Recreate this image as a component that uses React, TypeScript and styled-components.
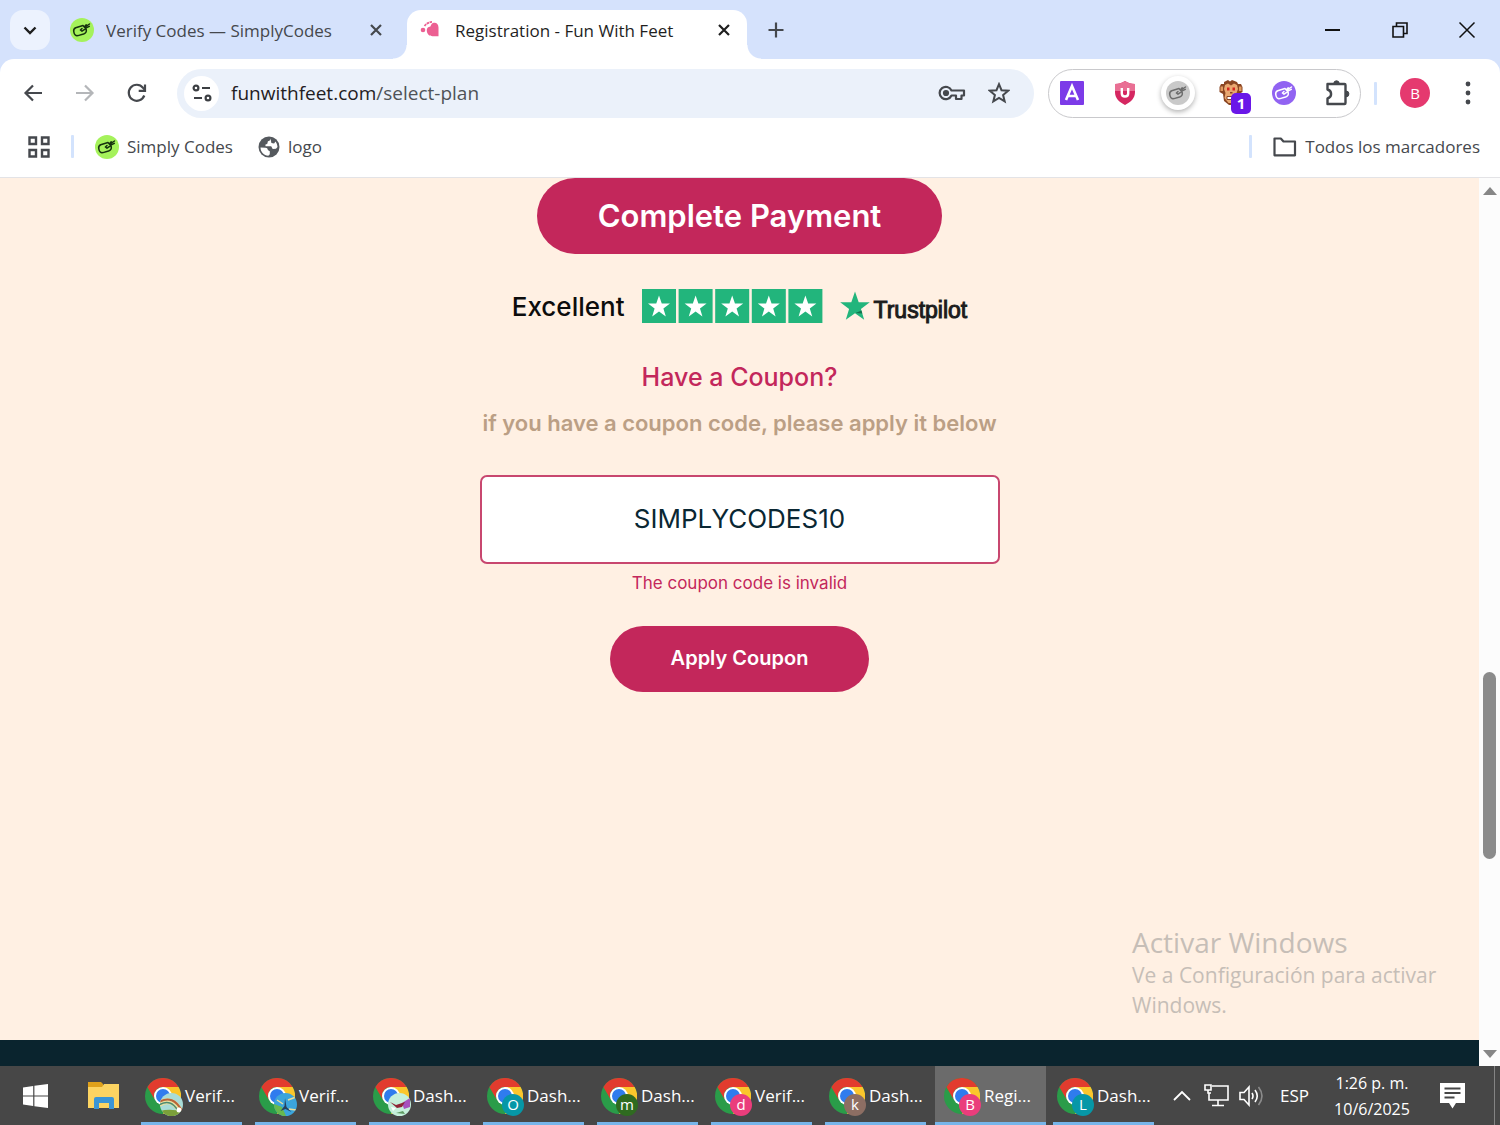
import React from "react";
import styled, { createGlobalStyle } from "styled-components";

const UI = `"Open Sans", "Noto Sans", sans-serif`;
const BRAND = `Inter, "Liberation Sans", sans-serif`;
const ROSE = "#c3275b";

const Global = createGlobalStyle`
  * { box-sizing: border-box; }
  body { margin: 0; font-family: ${UI}; }
  button { border: 0; padding: 0; background: none; font: inherit; color: inherit; cursor: pointer; }
  svg { display: block; flex: none; }
`;

const Desktop = styled.div`
  min-height: 100vh;
  display: flex;
  flex-direction: column;
  background: #d5e2fc;
`;

/* ---------- Tab strip ---------- */

const TabStrip = styled.header`
  height: 59px;
  display: flex;
  align-items: flex-start;
  padding: 10px 0 0 10px;
`;

const TabSearch = styled.button`
  width: 40px;
  height: 40px;
  border-radius: 13px;
  background: #ecf2fe;
  display: grid;
  place-items: center;
`;

const Tab = styled.div<{ $active?: boolean }>`
  position: relative;
  width: ${(p) => (p.$active ? 340 : 357)}px;
  height: ${(p) => (p.$active ? 49 : 40)}px;
  padding: ${(p) => (p.$active ? "0 12px 9px 13px" : "0 20px")};
  display: flex;
  align-items: center;
  gap: ${(p) => (p.$active ? 15 : 12)}px;
  font-size: 17px;
  color: ${(p) => (p.$active ? "#1f1f1f" : "#45484d")};
  background: ${(p) => (p.$active ? "#fff" : "transparent")};
  border-radius: 14px 14px 0 0;

  &::before,
  &::after {
    content: "";
    display: ${(p) => (p.$active ? "block" : "none")};
    position: absolute;
    bottom: 0;
    width: 14px;
    height: 14px;
  }
  &::before {
    left: -14px;
    background: radial-gradient(circle at 0 0, transparent 13px, #fff 14px);
  }
  &::after {
    right: -14px;
    background: radial-gradient(circle at 100% 0, transparent 13px, #fff 14px);
  }
`;

const TabTitle = styled.span`
  flex: 1;
  white-space: nowrap;
  overflow: hidden;
`;

const StripButton = styled.button`
  width: 22px;
  height: 40px;
  display: grid;
  place-items: center;
`;

const NewTab = styled(StripButton)`
  margin-left: 18px;
`;

const WindowControls = styled.div`
  margin-left: auto;
  display: flex;
`;

const WindowButton = styled(StripButton)`
  width: 67px;
`;

/* ---------- Toolbar ---------- */

const Toolbar = styled.nav`
  height: 68px;
  padding: 0 12px 0 13px;
  display: flex;
  align-items: center;
  background: #fff;
  border-radius: 14px 14px 0 0;
`;

const Row = styled.div<{ $gap: number }>`
  display: flex;
  align-items: center;
  gap: ${(p) => p.$gap}px;
`;

const IconButton = styled.button`
  position: relative;
  width: 40px;
  height: 40px;
  display: grid;
  place-items: center;
`;

const Omnibox = styled.div`
  flex: 1;
  height: 49px;
  margin: 0 14px 0 20px;
  padding: 0 15px 0 7px;
  display: flex;
  align-items: center;
  border-radius: 25px;
  background: #ebf1fa;
`;

const SiteInfo = styled.button`
  width: 35px;
  height: 35px;
  border-radius: 50%;
  background: #fff;
  display: grid;
  place-items: center;
`;

const Address = styled.div`
  flex: 1;
  margin-left: 12px;
  font-size: 19px;
  color: #4f5357;

  b {
    font-weight: 400;
    color: #1f2023;
  }
`;

const Extensions = styled.div`
  height: 49px;
  padding: 0 3px;
  display: flex;
  align-items: center;
  gap: 13px;
  border: 1px solid #c9c9cc;
  border-radius: 25px;
`;

const Letter = styled.span<{ $bg: string; $size: number }>`
  width: ${(p) => p.$size}px;
  height: ${(p) => p.$size}px;
  border-radius: 50%;
  background: ${(p) => p.$bg};
  color: #fff;
  font-size: 15px;
  line-height: 1;
  display: grid;
  place-items: center;
`;

const Raised = styled.span`
  width: 34px;
  height: 34px;
  border-radius: 50%;
  background: #fff;
  box-shadow: 0 2px 5px rgba(0, 0, 0, 0.3);
  display: grid;
  place-items: center;
`;

const Count = styled.span`
  position: absolute;
  right: 0;
  bottom: -1px;
  width: 20px;
  height: 21px;
  border-radius: 5px;
  background: #6a17e8;
  color: #fff;
  font-size: 15px;
  font-weight: 700;
  line-height: 21px;
  text-align: center;
`;

const Divider = styled.span`
  width: 3px;
  height: 23px;
  border-radius: 1px;
  background: #d3e3fd;
`;

const Profile = styled.div`
  margin-left: 13px;
  display: flex;
  align-items: center;
  gap: 18px;
`;

/* ---------- Bookmarks ---------- */

const Bookmarks = styled.nav`
  height: 51px;
  padding: 0 20px 11px 28px;
  display: flex;
  align-items: center;
  background: #fff;
  border-bottom: 1px solid #e3e3e6;
  font-size: 17px;
  color: #45484d;
`;

const Bookmark = styled.a`
  display: flex;
  align-items: center;
  gap: 8px;
  color: inherit;
  text-decoration: none;
  white-space: nowrap;
`;

const AllBookmarks = styled.div`
  margin-left: auto;
  display: flex;
  align-items: center;
  gap: 21px;
`;

/* ---------- Page ---------- */

const Viewport = styled.div`
  flex: 1;
  display: flex;
  background: #fff;
`;

const Page = styled.div`
  position: relative;
  flex: 1;
  display: flex;
  flex-direction: column;
  background: #fff0e3;
  font-family: ${BRAND};
`;

const Main = styled.main`
  flex: 1;
  display: flex;
  flex-direction: column;
  align-items: center;
`;

const Pill = styled.button<{ $large?: boolean }>`
  height: ${(p) => (p.$large ? 76 : 66)}px;
  padding: 0 61px 2px;
  border-radius: 38px;
  background: ${ROSE};
  color: #fff;
  font-size: ${(p) => (p.$large ? 31 : 20)}px;
  font-weight: 600;
`;

const Rating = styled.div`
  height: 36px;
  margin: 34px 0;
  display: flex;
  align-items: center;
  gap: 17px;
  font-size: 26px;
  font-weight: 500;
  color: #0c0c0c;
`;

const Trust = styled.a`
  display: flex;
  align-items: flex-end;
  gap: 4px;
  color: #1c1c1c;
  font-family: "Liberation Sans", sans-serif;
  font-size: 23px;
  line-height: 24px;
  text-decoration: none;
  -webkit-text-stroke: 1px #1c1c1c;
`;

const Form = styled.form`
  width: 520px;
  max-width: 100%;
  display: flex;
  flex-direction: column;
  align-items: center;
`;

const Title = styled.h2`
  margin: 0;
  font-size: 25px;
  line-height: 38px;
  font-weight: 500;
  color: ${ROSE};
`;

const Hint = styled.label`
  margin: 11px 0 36px;
  font-size: 22px;
  line-height: 32px;
  font-weight: 600;
  color: #bb9f85;
  white-space: nowrap;
`;

const CodeInput = styled.input`
  width: 100%;
  height: 89px;
  padding: 0 0 2px;
  border: 2px solid #c8476f;
  border-radius: 7px;
  background: #fff;
  text-align: center;
  font-family: ${BRAND};
  font-size: 26px;
  color: #0a2733;
  outline: none;
`;

const ErrorText = styled.p`
  margin: 6px 0 30px;
  font-size: 17px;
  line-height: 26px;
  color: ${ROSE};
`;

const SiteFooter = styled.footer`
  height: 26px;
  background: #0a242e;
`;

const Watermark = styled.aside`
  position: absolute;
  left: calc(100% - 347px);
  bottom: 46px;
  width: 330px;
  font-family: ${UI};
  font-size: 21px;
  line-height: 30px;
  color: #c6beb7;
`;

const WatermarkTitle = styled.div`
  font-size: 28px;
  line-height: 36px;
`;

const Scrollbar = styled.div`
  width: 21px;
  display: flex;
  flex-direction: column;
  align-items: center;
  background: #fcfcfc;
`;

const ScrollArrow = styled.button`
  width: 21px;
  height: 25px;
  display: grid;
  place-items: center;
`;

const Track = styled.div<{ $grow: number }>`
  flex: ${(p) => p.$grow} 0 0;
`;

const Thumb = styled(Track)`
  width: 13px;
  border-radius: 7px;
  background: #8b8b8b;
`;

/* ---------- Taskbar ---------- */

const Taskbar = styled.footer`
  height: 59px;
  display: flex;
  background: #474747;
  color: #fff;
  font-size: 17px;
`;

const Launcher = styled.button<{ $width: number }>`
  width: ${(p) => p.$width}px;
  display: grid;
  place-items: center;
`;

const TaskButton = styled.button<{ $active?: boolean }>`
  width: ${(p) => (p.$active ? 111 : 101)}px;
  margin: ${(p) => (p.$active ? "0 1px 0 2px" : "0 7px 0 6px")};
  padding: 3px 0 0 ${(p) => (p.$active ? 9 : 4)}px;
  display: flex;
  align-items: center;
  background: ${(p) => (p.$active ? "#6b6b6b" : "transparent")};
  border-bottom: 3px solid #76b5ea;
  white-space: nowrap;
`;

const AppIcon = styled.span`
  position: relative;
  width: 40px;
  height: 40px;
  padding-top: 2px;
`;

const Badge = styled(Letter)`
  position: absolute;
  left: 15px;
  top: 18px;
`;

const Tray = styled.div`
  margin-left: auto;
  padding-right: 5px;
  display: flex;
  align-items: center;
`;

const TrayButton = styled.button<{ $width: number }>`
  width: ${(p) => p.$width}px;
  height: 59px;
  display: grid;
  place-items: center;
  white-space: nowrap;
`;

const Clock = styled(TrayButton)`
  align-content: center;
  font-size: 16px;
  line-height: 26px;
`;

const ShowDesktop = styled.span`
  width: 1px;
  height: 59px;
  margin-left: 14px;
  background: #848484;
`;

/* ---------- Icons ---------- */

const HandIcon = ({ bg, ink, size = 24 }: { bg: string; ink: string; size?: number }) => (
  <svg width={size} height={size} viewBox="0 0 24 24">
    <circle cx="12" cy="12" r="12" fill={bg} />
    <path
      d="M19.500 6l-5 3.400-1.500-1.900-7.300 2.200c-1.900.8-2.300 2.400-1.900 4.200.5 2.900 1.900 4.300 4.200 3.700l5.600-1.600c2.300-.9 3.100-2.500 2.600-4.500l-.5-1.300 3.600-1.900M12 10.500l-1.600 1.500 1.600 1.200 3-2M16.200 6.800l-2 2.200"
      fill="none"
      stroke={ink}
      strokeWidth="1.500"
      strokeLinecap="round"
      strokeLinejoin="round"
    />
  </svg>
);

const Cross = ({ size = 12, color = "#45484d", width = 2.2 }: { size?: number; color?: string; width?: number }) => (
  <svg width={size} height={size} viewBox="0 0 12 12">
    <path d="M1 1l10 10M11 1L1 11" stroke={color} strokeWidth={width} />
  </svg>
);

const HeartFeet = () => (
  <svg width="20" height="18" viewBox="0 0 20 18">
    <path d="M18.500 15.200V6.500C18.500 3 16 1 13 2c-1.600.6-2 2-2.600 3.600C8 5.800 6.500 7.500 6.800 10c.4 3.500 3 5.200 5.700 5.200z" fill="#ec5f92" />
    <circle cx="3" cy="9" r="2.300" fill="#ec5f92" />
    <path d="M4.500 5C6 3 8.500 1.200 12 0.900" fill="none" stroke="#ec5f92" strokeWidth="1.800" strokeDasharray="2.600 0.600" />
  </svg>
);

const Arrow = ({ color, flip }: { color: string; flip?: boolean }) => (
  <svg width="20" height="18" viewBox="0 0 20 18">
    <path d={flip ? "M1 9h16M10 1.500L17.500 9 10 16.500" : "M19 9H3M10 1.500L2.500 9l7.500 7.500"} fill="none" stroke={color} strokeWidth="2.200" />
  </svg>
);

const Reload = () => (
  <svg width="20" height="20" viewBox="0 0 20 20">
    <path d="M17.300 12.500A8 8 0 1 1 16 4.700L18 7" fill="none" stroke="#45484d" strokeWidth="2.200" />
    <path d="M18 1.500v6.300h-6.300" fill="none" stroke="#45484d" strokeWidth="2.200" />
  </svg>
);

const Tune = () => (
  <svg width="20" height="18" viewBox="0 0 20 18" fill="none" stroke="#3c3f43" strokeWidth="2.200">
    <circle cx="4" cy="4" r="2.400" />
    <path d="M10 4h8M2 14h8" />
    <circle cx="16" cy="14" r="2.400" />
  </svg>
);

const KeyIcon = () => (
  <svg width="28" height="18" viewBox="0 0 28 18" fill="none" stroke="#45484d" strokeWidth="2.200" strokeLinejoin="round">
    <path d="M13.500 6.500A6.200 6.200 0 1 0 13.500 11.500H18V15h5.500v-3.500H26v-5z" />
    <circle cx="8" cy="9" r="2" fill="#45484d" />
  </svg>
);

const StarOutline = () => (
  <svg width="22" height="22" viewBox="0 0 22 22">
    <path d="M11 2.200l2.500 6 6.600.5-5 4.300 1.600 6.400L11 16l-5.700 3.400L6.900 13l-5-4.300 6.600-.5z" fill="none" stroke="#45484d" strokeWidth="2" />
  </svg>
);

const LetterA = () => (
  <svg width="24" height="24" viewBox="0 0 24 24">
    <rect width="24" height="24" rx="1" fill="#7c3be8" />
    <path d="M6 19L12 5l6 14M8.500 15h7" fill="none" stroke="#fff" strokeWidth="2.600" />
  </svg>
);

const Shield = () => (
  <svg width="22" height="24" viewBox="0 0 22 24">
    <path d="M11 0c3 2 6 3 10 3v8c0 6-4 10-10 13C5 21 1 17 1 11V3c4 0 7-1 10-3z" fill="#d52761" />
    <path d="M11 0c3 2 6 3 10 3v7H1V3c4 0 7-1 10-3z" fill="#e96f94" />
    <path d="M7.800 7v5.500c0 4 6.400 4 6.400 0V7" fill="none" stroke="#fff" strokeWidth="2.400" />
  </svg>
);

const Monkey = () => (
  <svg width="24" height="26" viewBox="0 0 24 26">
    <path d="M5 2l4-2 2 1.500L13 0l5 2 1 2h3l1.500 3v5L20 14l-1 7-5 4h-4l-5-4-1-7-3.500-2V7L2 4h3z" fill="#8a4522" />
    <path d="M6 5l3-1.500 3 2 3-2L18 5l1 4-1.500 4 1 5-4 5H9.500l-4-5 1-5L5 9z" fill="#e9a870" />
    <path d="M1.500 6.500h2.500v4.500H1.500zM20 6.500h2.500v4.500H20z" fill="#e0995f" />
    <path d="M8 7.500h2.500v3H8zM13.500 7.500H16v3h-2.500z" fill="#d5251e" />
    <path d="M11 12h2.500v1.500H11z" fill="#8a4522" />
    <path d="M8 16.500h8v3H8z" fill="#fff" stroke="#8a4522" />
  </svg>
);

const Puzzle = () => (
  <svg width="26" height="28" viewBox="0 0 26 28">
    <path d="M3.500 5H20.500q1 0 1 1V24q0 1-1 1H3.500v-5.500c4.800-1.500 4.800-7.500 0-9z" fill="none" stroke="#45484d" strokeWidth="2.400" strokeLinejoin="round" />
    <path d="M9.800 4.500a2.700 2.700 0 0 1 5.400 0zM22 12a2.900 2.900 0 0 1 0 5.800z" fill="#45484d" stroke="#45484d" />
  </svg>
);

const Dots = () => (
  <svg width="6" height="24" viewBox="0 0 6 24" fill="#45484d">
    <circle cx="3" cy="3" r="2.400" />
    <circle cx="3" cy="12" r="2.400" />
    <circle cx="3" cy="21" r="2.400" />
  </svg>
);

const Apps = () => (
  <svg width="22" height="22" viewBox="0 0 22 22" fill="none" stroke="#45484d" strokeWidth="2.400">
    <path d="M1.500 1.500h6.500v6.500H1.500zM14 1.500h6.500v6.500H14zM1.500 14h6.500v6.500H1.500zM14 14h6.500v6.500H14z" />
  </svg>
);

const Globe = () => (
  <svg width="22" height="22" viewBox="0 0 22 22">
    <circle cx="11" cy="11" r="10.500" fill="#55595e" />
    <path d="M2.500 11.500l5 .2c1.800.2 2.300 1 2.300 2.300l2 1.200v3l-1.500 1.600C6 19.500 2.600 16 2.500 11.500zM12.500 2.500c-.2 1.800-1 2.500-2.600 2.800l-.6 2.400-2 1 .3 1.600h5.600l1.500 2.800 3.300-.3 1.500-1.800c-.2-2-.8-4-2-5.500l-1.400 2-2.700-.6z" fill="#fff" />
  </svg>
);

const Folder = () => (
  <svg width="24" height="20" viewBox="0 0 24 20">
    <path d="M1.500 1.500h6.300l2.700 3h11.500v13.800H1.500z" fill="none" stroke="#45484d" strokeWidth="2.200" strokeLinejoin="round" />
  </svg>
);

const STAR = "M0-10.500L2.500-3.200H10L4 1.300 6.200 8.600 0 4.200-6.200 8.600-4 1.300-10-3.200H-2.500z";

const Stars = () => (
  <svg width="181" height="34" viewBox="0 0 181 34" role="img" aria-label="5 of 5 stars">
    {[0, 1, 2, 3, 4].map((i) => (
      <g key={i} transform={`translate(${i * 36.6} 0)`}>
        <rect width="34" height="34" fill="#22b57c" />
        <path d={STAR} transform="translate(17 18) scale(1.100)" fill="#fff" />
      </g>
    ))}
  </svg>
);

const TrustStar = () => (
  <svg width="30" height="32" viewBox="0 0 30 32">
    <path d={STAR} transform="translate(15 17) scale(1.480)" fill="#22b57c" />
    <path d="M15.500 23l6-2.500.8 3z" fill="#12724c" />
  </svg>
);

const Triangle = ({ down }: { down?: boolean }) => (
  <svg width="14" height="8" viewBox="0 0 14 8">
    <path d={down ? "M0 0h14L7 8z" : "M0 8h14L7 0z"} fill="#868686" />
  </svg>
);

const Chrome = () => (
  <svg width="36" height="36" viewBox="0 0 36 36">
    <circle cx="18" cy="18" r="18" fill="#2a9c49" />
    <path d="M18 9h15.600A18 18 0 0 1 18 36l7.800-13.500z" fill="#fbc62c" />
    <path d="M2.400 9A18 18 0 0 1 33.600 9H18a9 9 0 0 0-7.800 13.500z" fill="#e23b2e" />
    <circle cx="18" cy="18" r="9" fill="#fff" />
    <circle cx="18" cy="18" r="7" fill="#2f7cee" />
  </svg>
);

const Round = styled.svg`
  position: absolute;
  left: 15px;
  top: 17px;
  border-radius: 50%;
`;

const Scene = ({ kind }: { kind: string }) => (
  <Round width="23" height="23" viewBox="0 0 23 23">
    {kind === "rainbow" && (
      <>
        <rect width="23" height="23" fill="#a9dcd8" />
        <path d="M-1 11Q12 3 20 18" fill="none" stroke="#e9dfa0" strokeWidth="6" />
        <path d="M-1 9Q13 1 22 18" fill="none" stroke="#b8643a" strokeWidth="2" />
        <path d="M-1 12Q11 5 18 18" fill="none" stroke="#4b8b72" strokeWidth="1.500" />
        <path d="M0 18q11-3 23 1v4H0z" fill="#7ba03a" />
        <circle cx="19" cy="17" r="2.500" fill="#fff" />
      </>
    )}
    {kind === "map" && (
      <>
        <rect width="23" height="23" fill="#3ba5dc" />
        <path d="M0 11l8 3 4 9H0z" fill="#68b94e" />
        <path d="M11 5l1.500 9 5 5-6-3-5 2 4-5z" fill="#26405e" />
        <path d="M14 7l8-3M3 7l6 4M15 16l7 1" stroke="#eadf9a" strokeWidth="1.500" />
      </>
    )}
    {kind === "bird" && (
      <>
        <rect width="23" height="23" fill="#c5f0dc" />
        <path d="M14 10l8-5v9l-6 2z" fill="#a651bd" />
        <path d="M2 9l6 3 9-3-3 5-5 1z" fill="#8f2638" />
        <path d="M3 14l5 1-3 3z" fill="#fff" />
        <path d="M8 20l7-2 2 3z" fill="#5f9b64" />
      </>
    )}
  </Round>
);

const WindowsLogo = () => (
  <svg width="25" height="24" viewBox="0 0 25 24" fill="#fff">
    <path d="M0 3.400l10.200-1.400v9.500H0zM11.400 1.800L25 0v11.500H11.400zM0 12.600h10.200V22L0 20.600zM11.400 12.600H25V24l-13.600-1.800z" />
  </svg>
);

const Explorer = () => (
  <svg width="33" height="28" viewBox="0 0 33 28">
    <path d="M1 0h13l2 2v4H1z" fill="#dfa11b" />
    <path d="M1 5h14l2-3h15v24H1z" fill="#fcd462" />
    <path d="M7 27V17q0-2 2-2h16q2 0 2 2v10h-5v-6H12v6z" fill="#3a95d6" />
  </svg>
);

const Monitor = () => (
  <svg width="25" height="23" viewBox="0 0 25 23" fill="none" stroke="#fff" strokeWidth="1.600">
    <path d="M8 2h16v14H5V9M14 16v5M8 21.500h12" />
    <path d="M1 1h6v5H1zM4 6v3h3" />
  </svg>
);

const Speaker = () => (
  <svg width="25" height="22" viewBox="0 0 25 22" fill="none" stroke="#fff" strokeWidth="1.600">
    <path d="M1 7.500h4L10 2v18l-5-5.500H1zM13 8q2 3 0 6M16 5q4.500 6 0 12" />
    <path d="M19.500 2q7 9 0 18" stroke="#8b8b8b" />
  </svg>
);

const Note = () => (
  <svg width="25" height="26" viewBox="0 0 25 26">
    <path d="M0 0h25v20H16l-3.500 5.500L9 20H0z" fill="#fff" />
    <path d="M4.500 5.500h16M4.500 10h16M4.500 14.500h10" stroke="#474747" strokeWidth="1.800" />
  </svg>
);

/* ---------- App ---------- */

const tasks: { label: string; letter?: string; color?: string; scene?: string; active?: boolean }[] = [
  { label: "Verif...", scene: "rainbow" },
  { label: "Verif...", scene: "map" },
  { label: "Dash...", scene: "bird" },
  { label: "Dash...", letter: "O", color: "#0697a7" },
  { label: "Dash...", letter: "m", color: "#2f6b20" },
  { label: "Verif...", letter: "d", color: "#ea3d7c" },
  { label: "Dash...", letter: "k", color: "#8d6e63" },
  { label: "Regi...", letter: "B", color: "#ea3d7c", active: true },
  { label: "Dash...", letter: "L", color: "#0697a7" },
];

export default function App() {
  return (
    <Desktop>
      <Global />
      <TabStrip>
        <TabSearch aria-label="Buscar pestañas">
          <svg width="14" height="9" viewBox="0 0 14 9">
            <path d="M1.500 1.500L7 7l5.500-5.500" fill="none" stroke="#1f1f1f" strokeWidth="2.400" />
          </svg>
        </TabSearch>
        <Tab>
          <HandIcon bg="#a5f25b" ink="#16310e" />
          <TabTitle>Verify Codes — SimplyCodes</TabTitle>
          <StripButton aria-label="Cerrar">
            <Cross />
          </StripButton>
        </Tab>
        <Tab $active>
          <HeartFeet />
          <TabTitle>Registration - Fun With Feet</TabTitle>
          <StripButton aria-label="Cerrar">
            <Cross color="#1f1f1f" />
          </StripButton>
        </Tab>
        <NewTab aria-label="Nueva pestaña">
          <svg width="16" height="16" viewBox="0 0 16 16">
            <path d="M8 0.500v15M0.500 8h15" stroke="#45484d" strokeWidth="2.200" />
          </svg>
        </NewTab>
        <WindowControls>
          <WindowButton aria-label="Minimizar">
            <svg width="15" height="2" viewBox="0 0 15 2">
              <path d="M0 1h15" stroke="#111" strokeWidth="2" />
            </svg>
          </WindowButton>
          <WindowButton aria-label="Restaurar">
            <svg width="16" height="16" viewBox="0 0 16 16">
              <path d="M1 4.500h10.500V15H1zM4.500 4.500V1H15v10.500h-3.500" fill="none" stroke="#111" strokeWidth="1.600" />
            </svg>
          </WindowButton>
          <WindowButton aria-label="Cerrar ventana">
            <Cross size={18} color="#111" width={1} />
          </WindowButton>
        </WindowControls>
      </TabStrip>

      <Toolbar>
        <Row $gap={12}>
          <IconButton aria-label="Atrás">
            <Arrow color="#45484d" />
          </IconButton>
          <IconButton aria-label="Adelante">
            <Arrow color="#b4b6b9" flip />
          </IconButton>
          <IconButton aria-label="Recargar">
            <Reload />
          </IconButton>
        </Row>
        <Omnibox>
          <SiteInfo aria-label="Información del sitio">
            <Tune />
          </SiteInfo>
          <Address>
            <b>funwithfeet.com</b>/select-plan
          </Address>
          <Row $gap={7}>
            <IconButton aria-label="Contraseñas">
              <KeyIcon />
            </IconButton>
            <IconButton aria-label="Añadir a marcadores">
              <StarOutline />
            </IconButton>
          </Row>
        </Omnibox>
        <Extensions>
          <IconButton aria-label="Extensión A">
            <LetterA />
          </IconButton>
          <IconButton aria-label="Protección">
            <Shield />
          </IconButton>
          <IconButton aria-label="SimplyCodes">
            <Raised>
              <HandIcon bg="#c9c9c9" ink="#6d6d6d" />
            </Raised>
          </IconButton>
          <IconButton>
            <Monkey />
            <Count>1</Count>
          </IconButton>
          <IconButton aria-label="Cupones">
            <HandIcon bg="#9163f2" ink="#ffffff" />
          </IconButton>
          <IconButton aria-label="Extensiones">
            <Puzzle />
          </IconButton>
        </Extensions>
        <Profile>
          <Divider />
          <Row $gap={13}>
            <IconButton>
              <Letter $bg="#e5396f" $size={30}>
                B
              </Letter>
            </IconButton>
            <IconButton aria-label="Menú">
              <Dots />
            </IconButton>
          </Row>
        </Profile>
      </Toolbar>

      <Bookmarks>
        <Row $gap={21}>
          <Apps />
          <Divider />
          <Row $gap={25}>
            <Bookmark href="#simply">
              <HandIcon bg="#a5f25b" ink="#16310e" />
              Simply Codes
            </Bookmark>
            <Bookmark href="#logo">
              <Globe />
              logo
            </Bookmark>
          </Row>
        </Row>
        <AllBookmarks>
          <Divider />
          <Bookmark href="#todos">
            <Folder />
            Todos los marcadores
          </Bookmark>
        </AllBookmarks>
      </Bookmarks>

      <Viewport>
        <Page>
          <Main>
            <Pill $large>Complete Payment</Pill>
            <Rating>
              Excellent
              <Stars />
              <Trust href="#trustpilot">
                <TrustStar />
                Trustpilot
              </Trust>
            </Rating>
            <Form onSubmit={(e) => e.preventDefault()}>
              <Title>Have a Coupon?</Title>
              <Hint htmlFor="coupon">if you have a coupon code, please apply it below</Hint>
              <CodeInput id="coupon" defaultValue="SIMPLYCODES10" />
              <ErrorText>The coupon code is invalid</ErrorText>
              <Pill type="submit">Apply Coupon</Pill>
            </Form>
          </Main>
          <SiteFooter />
          <Watermark>
            <WatermarkTitle>Activar Windows</WatermarkTitle>
            Ve a Configuración para activar Windows.
          </Watermark>
        </Page>
        <Scrollbar>
          <ScrollArrow aria-label="Subir">
            <Triangle />
          </ScrollArrow>
          <Track $grow={469} />
          <Thumb $grow={187} />
          <Track $grow={182} />
          <ScrollArrow aria-label="Bajar">
            <Triangle down />
          </ScrollArrow>
        </Scrollbar>
      </Viewport>

      <Taskbar>
        <Launcher $width={71} aria-label="Inicio">
          <WindowsLogo />
        </Launcher>
        <Launcher $width={64} aria-label="Explorador">
          <Explorer />
        </Launcher>
        {tasks.map((t, i) => (
          <TaskButton key={i} $active={t.active}>
            <AppIcon>
              <Chrome />
              {t.scene && <Scene kind={t.scene} />}
              {t.letter && (
                <Badge $bg={t.color!} $size={22}>
                  {t.letter}
                </Badge>
              )}
            </AppIcon>
            {t.label}
          </TaskButton>
        ))}
        <Tray>
          <TrayButton $width={35} aria-label="Iconos ocultos">
            <svg width="18" height="11" viewBox="0 0 18 11">
              <path d="M1 10l8-8 8 8" fill="none" stroke="#fff" strokeWidth="1.800" />
            </svg>
          </TrayButton>
          <TrayButton $width={35} aria-label="Red">
            <Monitor />
          </TrayButton>
          <TrayButton $width={35} aria-label="Volumen">
            <Speaker />
          </TrayButton>
          <TrayButton $width={51}>ESP</TrayButton>
          <Clock $width={104}>
            <span>1:26 p. m.</span>
            <span>10/6/2025</span>
          </Clock>
          <TrayButton $width={56} aria-label="Notificaciones">
            <Note />
          </TrayButton>
          <ShowDesktop />
        </Tray>
      </Taskbar>
    </Desktop>
  );
}
